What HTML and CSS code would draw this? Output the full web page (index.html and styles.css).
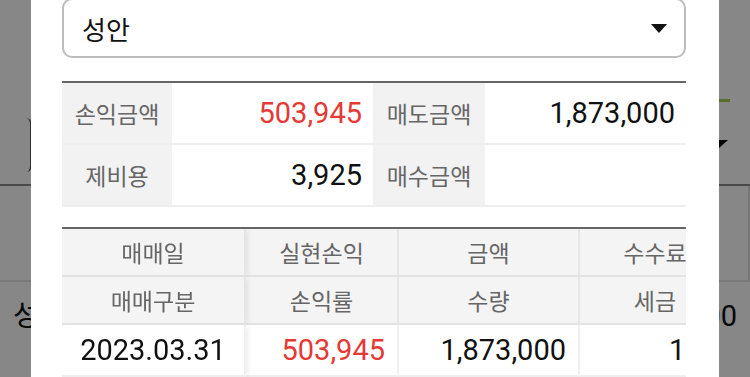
FILE: index.html
```html
<!DOCTYPE html>
<html lang="ko">
<head>
    <meta charset="UTF-8">
    <meta name="viewport" content="width=device-width, initial-scale=1.0">
    <title>매매내역</title>
    <link rel="stylesheet" href="styles.css">
</head>
<body>
    <div class="screen">
        <div class="page">
            <div class="page-top">
                <div class="field-left"></div>
                <div class="field-right">
                    <span class="green-dash"></span>
                    <span class="caret-dark"></span>
                </div>
            </div>
            <div class="page-row-empty"></div>
            <div class="page-row-data">
                <span>성안</span>
                <span>1,873,000</span>
            </div>
        </div>

        <div class="dim"></div>

        <div class="dialog">
            <div class="picker">
                <span>성안</span>
                <span class="picker-caret"></span>
            </div>

            <div class="summary">
                <div class="cell label">손익금액</div>
                <div class="cell value red">503,945</div>
                <div class="cell label">매도금액</div>
                <div class="cell value">1,873,000</div>
                <div class="cell label">제비용</div>
                <div class="cell value">3,925</div>
                <div class="cell label">매수금액</div>
                <div class="cell value"></div>
            </div>

            <div class="trade">
                <div class="trade-grid">
                    <div class="th frozen">매매일</div>
                    <div class="th">실현손익</div>
                    <div class="th">금액</div>
                    <div class="th">수수료</div>

                    <div class="th frozen">매매구분</div>
                    <div class="th">손익률</div>
                    <div class="th">수량</div>
                    <div class="th">세금</div>

                    <div class="td center frozen">2023.03.31</div>
                    <div class="td red">503,945</div>
                    <div class="td">1,873,000</div>
                    <div class="td">179</div>
                </div>
            </div>
        </div>
    </div>
</body>
</html>
```

FILE: styles.css
```css
* {
    box-sizing: border-box;
}
body {
    margin: 0;
    font-family: Roboto, "Noto Sans CJK KR", sans-serif;
}
.screen {
    position: relative;
    width: 750px;
    height: 377px;
    overflow: hidden;
    background: #fff;
}

/* page behind the dialog */
.page-top {
    height: 186px;
    display: flex;
    justify-content: space-between;
    border-bottom: 2px solid #8b8b8b;
}
.field-left {
    margin-top: 118px;
    width: 32px;
    height: 54px;
    border-right: 2px solid #5a5a5a;
    border-radius: 0 6px 6px 0;
}
.field-right {
    width: 40px;
    padding-top: 99px;
}
.green-dash {
    display: block;
    width: 11px;
    height: 3px;
    margin-left: 9px;
    background: #a8cc4e;
}
.caret-dark {
    display: block;
    margin-top: 38px;
    width: 0;
    height: 0;
    border-left: 9px solid transparent;
    border-right: 9px solid transparent;
    border-top: 8px solid #000;
}
.page-row-empty {
    height: 96px;
    border-bottom: 2px solid #e5e5e5;
    border-right: 2px solid #e0e0e0;
}
.page-row-data {
    display: flex;
    justify-content: space-between;
    padding: 16px 13px 0 13px;
    font-size: 29px;
    line-height: 36px;
    color: #111;
}
.dim {
    position: absolute;
    inset: 0;
    background: rgba(0, 0, 0, 0.47);
}

/* dialog */
.dialog {
    position: absolute;
    left: 31px;
    top: -20px;
    width: 688px;
    height: 420px;
    padding: 18px 33px 0 31px;
    background: #fff;
}
.picker {
    height: 60px;
    display: flex;
    align-items: center;
    justify-content: space-between;
    padding: 0 17px 0 18px;
    border: 2px solid #bcbcbc;
    border-radius: 10px;
    font-size: 26px;
    color: #111;
}
.picker-caret {
    width: 0;
    height: 0;
    border-left: 8px solid transparent;
    border-right: 8px solid transparent;
    border-top: 9px solid #111;
}

.summary {
    margin-top: 23px;
    display: grid;
    grid-template-columns: 110px 201px 112px 201px;
    border-top: 2px solid #666;
}
.cell {
    height: 62px;
    display: flex;
    align-items: center;
    border-bottom: 2px solid #eee;
}
.label {
    justify-content: center;
    background: #f2f2f2;
    color: #666;
    font-size: 23px;
}
.value {
    justify-content: flex-end;
    padding-right: 11px;
    font-size: 29px;
    color: #111;
}
.red {
    color: #e53935;
}

.trade {
    margin-top: 20px;
    border-top: 2px solid #666;
    overflow: hidden;
}
.trade-grid {
    display: grid;
    grid-template-columns: 184px 153px 181px 152px;
    width: max-content;
}
.th {
    height: 48px;
    display: flex;
    align-items: center;
    justify-content: center;
    background: #f4f4f4;
    color: #666;
    font-size: 23px;
    border-right: 2px solid #e6e6e6;
    border-bottom: 2px solid #e3e3e3;
}
.td {
    height: 52px;
    display: flex;
    align-items: center;
    justify-content: flex-end;
    padding-right: 12px;
    background: #fff;
    font-size: 29px;
    color: #111;
    border-right: 2px solid #f0f0f0;
    border-bottom: 2px solid #eee;
}
.td.center {
    justify-content: center;
    padding: 0;
}
.td.red {
    color: #e53935;
}
.frozen {
    position: sticky;
    left: 0;
    z-index: 1;
    box-shadow: 4px 0 5px -2px rgba(0, 0, 0, 0.08);
}
```
